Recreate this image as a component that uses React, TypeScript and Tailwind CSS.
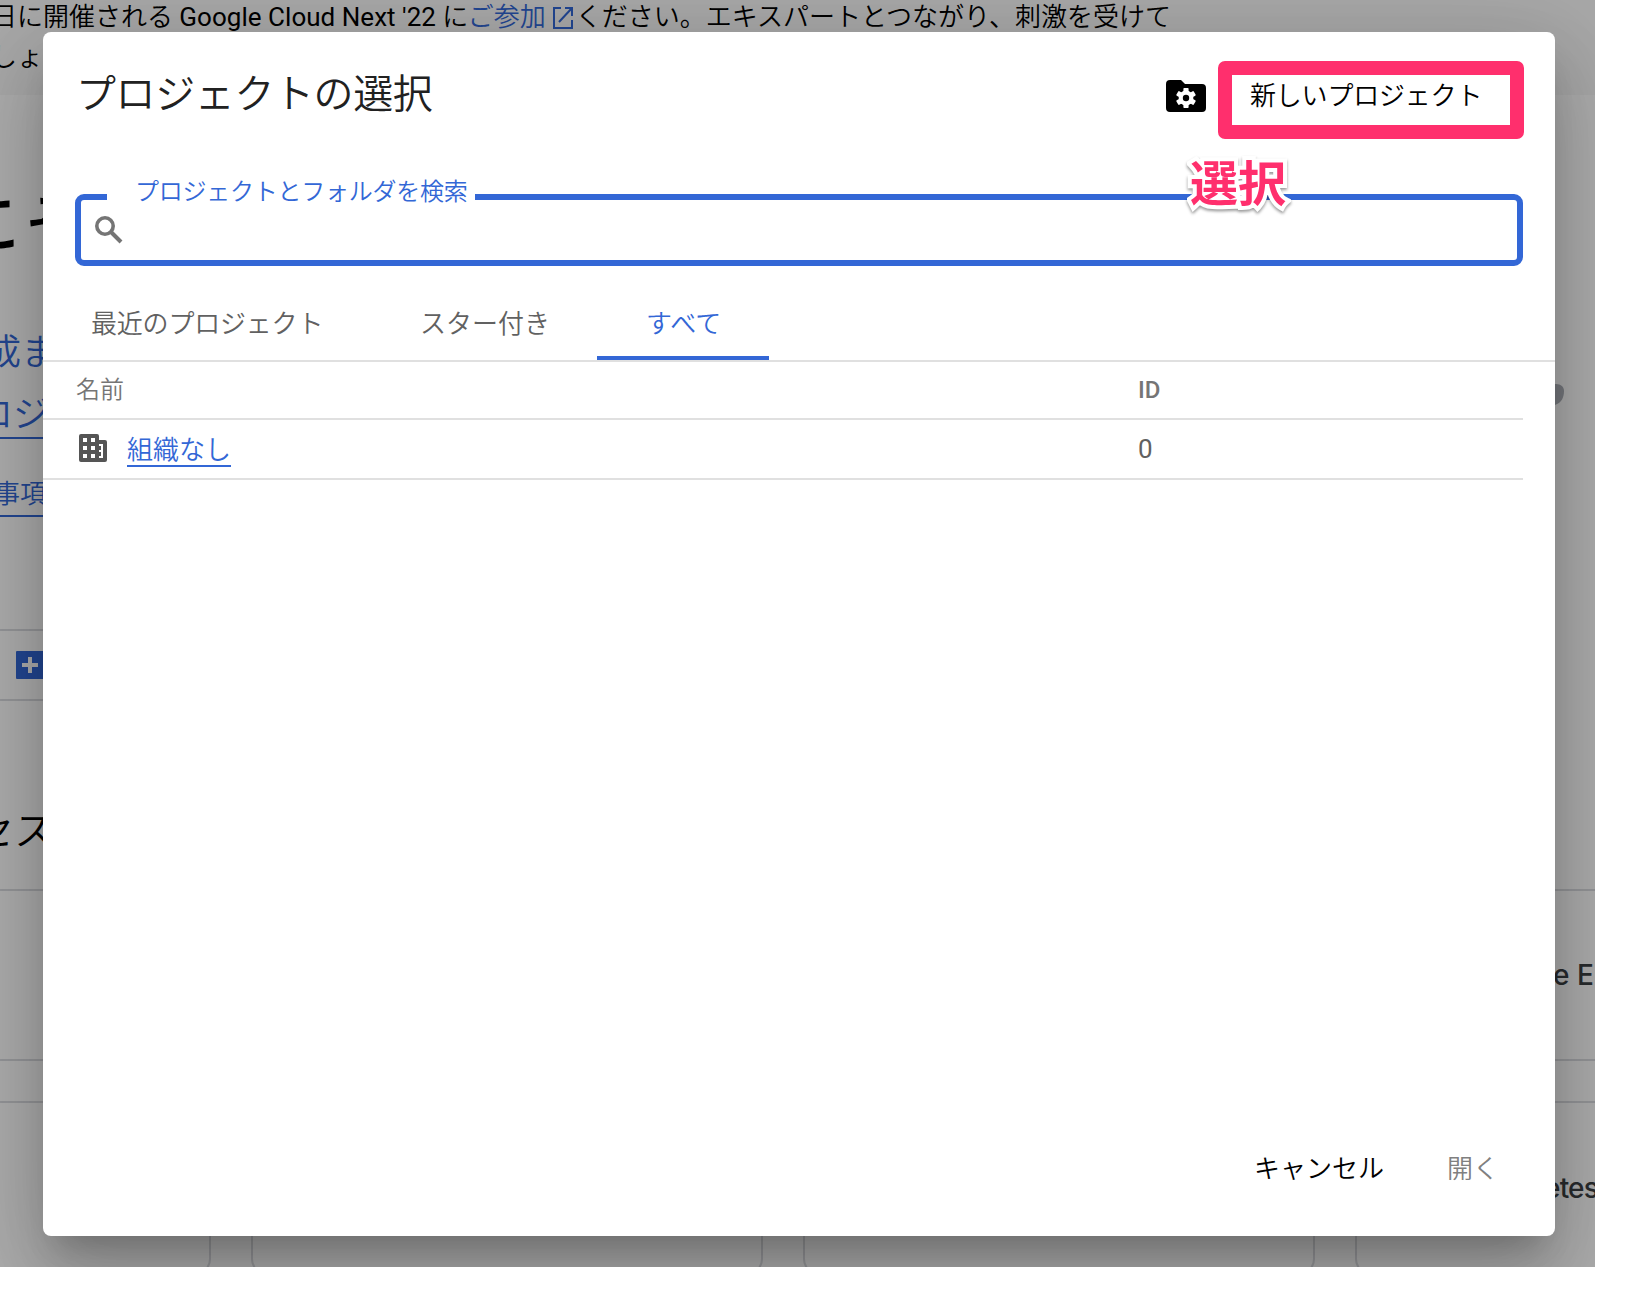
const tabs = [
  { label: "最近のプロジェクト", className: "w-[329px] pl-[48px] tracking-[-0.2px]", active: false },
  { label: "スター付き", className: "w-[225px] pl-[48px]", active: false },
  { label: "すべて", className: "w-[172px] pl-[49px]", active: true },
];

const topCards = ["", "", "", "e E"];
const bottomCards = ["", "", "", "etes"];

function LaunchIcon() {
  return (
    <svg className="inline-block ml-[7px] mr-[3px] -mt-[5px]" width="20" height="24" viewBox="0 0 20 24" fill="none" stroke="currentColor" strokeWidth="2">
      <path d="M8 3H1v20h18v-8M12 3h7v8M19 3L6 17" />
    </svg>
  );
}

function SearchIcon() {
  return (
    <svg width="28" height="28" viewBox="0 0 28 28" fill="none" stroke="#757575">
      <circle cx="10" cy="10" r="8.2" strokeWidth="3.6" />
      <path d="M16 16l10 10" strokeWidth="4" />
    </svg>
  );
}

function FolderSettingsIcon() {
  return (
    <svg width="40" height="32" viewBox="0 0 40 32">
      <path d="M4 0h11l4 4h17a4 4 0 0 1 4 4v20a4 4 0 0 1-4 4H4a4 4 0 0 1-4-4V4a4 4 0 0 1 4-4z" fill="#000" />
      <g fill="#fff">
        <circle cx="20" cy="18" r="7.4" />
        <rect x="17.4" y="8" width="5.2" height="20" rx="0.8" />
        <rect x="17.4" y="8" width="5.2" height="20" rx="0.8" transform="rotate(60 20 18)" />
        <rect x="17.4" y="8" width="5.2" height="20" rx="0.8" transform="rotate(120 20 18)" />
      </g>
      <circle cx="20" cy="18" r="3.2" fill="#000" />
    </svg>
  );
}

function OrganizationIcon() {
  return (
    <svg width="28" height="28" viewBox="0 0 28 28">
      <path d="M2 0h16a2 2 0 0 1 2 2v4h6a2 2 0 0 1 2 2v18a2 2 0 0 1-2 2H2a2 2 0 0 1-2-2V2a2 2 0 0 1 2-2z" fill="#555" />
      <path
        d="M4 4h4v4H4zM12 4h4v4h-4zM4 12h4v4H4zM12 12h4v4h-4zM4 20h4v4H4zM12 20h4v4h-4zM20 10h4v14h-4v-2h2v-4h-2v-2h2v-4h-2z"
        fill="#fff"
      />
    </svg>
  );
}

function CardRow({ titles, className }: { titles: string[]; className: string }) {
  return (
    <div className={`flex gap-10 -ml-[301px] w-max ${className}`}>
      {titles.map((title, index) => (
        <div
          key={index}
          className="w-[512px] h-full shrink-0 rounded-[16px] border-2 border-[#dadce0] flex items-center pl-[196px] text-[28px] font-medium text-[#3c4043] font-['Inter',sans-serif]"
        >
          {title && <span className={title === "etes" ? "-ml-[9px] tracking-[-0.8px]" : ""}>{title}</span>}
        </div>
      ))}
    </div>
  );
}

function ConsolePage() {
  return (
    <div className="h-full text-black whitespace-nowrap">
      {/* Announcement banner */}
      <div className="h-[95px] bg-[#f8f8f8] text-[26px] leading-[40px]">
        <div className="-ml-[9px] -mt-[3px] absolute font-[350]">
          <p>
            日に開催される <span className="font-normal tracking-[0.03px]">Google Cloud Next '22</span> に
            <span className="text-[#3367d6]">
              ご参加
              <LaunchIcon />
            </span>
            ください。エキスパートとつながり、刺激を受けて
          </p>
          <p>しょう。</p>
        </div>
      </div>

      <div className="w-[800px] font-[350] text-[#3367d6]">
        <p className="pt-[90px] -ml-[40px] h-[170px] text-[64px] leading-[80px] font-medium text-black">こそ</p>
        <p className="mt-[68px] -ml-[15px] h-[40px] text-[36px] leading-[40px]">成ま</p>
        <p className="mt-[20px] -ml-[23px] h-[46px] text-[36px] leading-[44px] border-b-2 border-[#3367d6]">ロジ</p>
        <p className="mt-[41px] -ml-[6px] h-[37px] text-[26px] leading-[28px] border-b-2 border-[#3367d6]">事項</p>

        <div className="mt-[112px] h-[72px] border-y-2 border-[#dadce0] flex items-center pl-4">
          <svg width="28" height="28" viewBox="0 0 28 28">
            <rect width="28" height="28" rx="1" fill="#3367d6" />
            <path d="M12 6h4v6h6v4h-6v6h-4v-6H6v-4h6z" fill="#fff" />
          </svg>
        </div>

        <p className="mt-[111px] -ml-[26px] h-[40px] text-[40px] leading-[40px] text-black">セス</p>
      </div>
      <CardRow titles={topCards} className="mt-[37px] h-[172px]" />
      <CardRow titles={bottomCards} className="mt-10 h-[174px]" />
    </div>
  );
}

function ProjectDialog() {
  return (
    <div className="absolute left-[43px] top-[32px] w-[1512px] h-[1204px] rounded-[8px] bg-white flex flex-col font-[350] shadow-[0_22px_30px_-14px_rgba(0,0,0,0.2),0_48px_76px_6px_rgba(0,0,0,0.14),0_18px_92px_16px_rgba(0,0,0,0.12)]">
      <div className="relative h-[162px] flex items-start justify-between pl-[33px] pr-[31px] pt-[29px]">
        <h1 className="text-[40px] leading-[60px] mt-[4px] tracking-[-0.4px] text-[#212121]">プロジェクトの選択</h1>
        <div className="flex items-start">
          <div className="mt-[19px] mr-3">
            <FolderSettingsIcon />
          </div>
          <button className="w-[306px] h-[78px] border-[14px] border-[#ff2f6d] rounded-[7px] text-[26px] leading-[40px] text-left pl-[18px] pb-[9px] tracking-[-0.2px]">
            新しいプロジェクト
          </button>
        </div>
        <span className="absolute z-10 left-[1147px] top-[117px] text-[48px] leading-[72px] font-bold text-[#ff2f6d] [-webkit-text-stroke:8px_white] [paint-order:stroke_fill] [stroke-linejoin:round] [filter:drop-shadow(0_2px_1.5px_rgba(0,0,0,0.4))]">
          選択
        </span>
      </div>

      {/* Search field with a notched outline */}
      <div className="relative ml-8 w-[1448px] h-[72px] border-[6px] border-[#3367d6] rounded-[9px] pl-[14px] pt-4">
        <SearchIcon />
        <label className="absolute left-[26px] -top-[26px] w-[368px] h-[36px] bg-white pl-[28px] text-[24px] leading-[36px] tracking-[-0.25px] text-[#3367d6] whitespace-nowrap">
          プロジェクトとフォルダを検索
        </label>
      </div>

      <div className="mt-[22px] h-[74px] flex border-b-2 border-[#e0e0e0] text-[26px] leading-[72px] text-[#616161]">
        {tabs.map((tab) => (
          <div
            key={tab.label}
            className={`${tab.className} h-[72px] ${tab.active ? "text-[#3367d6] border-b-4 border-[#3367d6]" : ""}`}
          >
            {tab.label}
          </div>
        ))}
      </div>

      <div className="w-[1480px]">
        <div className="h-[58px] border-b-2 border-[#e0e0e0] flex pl-[33px] text-[24px] leading-[56px] text-[#757575]">
          <span className="w-[1062px]">名前</span>
          <span className="font-medium">ID</span>
        </div>
        <div className="h-[60px] border-b-2 border-[#e0e0e0] flex pl-9 text-[26px] text-[#616161]">
          <div className="w-12 pt-[14px]">
            <OrganizationIcon />
          </div>
          <div className="w-[1011px]">
            <a className="inline-block h-[47px] leading-[60px] text-[#3367d6] border-b-2 border-[#3367d6]">組織なし</a>
          </div>
          <span className="leading-[58px] font-normal">0</span>
        </div>
      </div>

      <div className="mt-auto mb-[47px] flex justify-end gap-[63px] pr-[56px] text-[26px] leading-[40px]">
        <button>キャンセル</button>
        <button className="text-[#808080]">開く</button>
      </div>
    </div>
  );
}

export default function App() {
  return (
    <div className="w-[1636px] h-[1308px] bg-white font-['Roboto','Noto_Sans_CJK_JP',sans-serif]">
      <div className="relative w-[1595px] h-[1267px] overflow-hidden">
        <ConsolePage />
        <svg className="absolute left-[1544px] top-[384px]" width="20" height="21" viewBox="0 0 20 21">
          <path d="M0 0h12c5 0 8 3 8 7 0 7-3 12-9 14H0z" fill="#aeb1b9" />
        </svg>
        <div className="absolute inset-0 bg-black/32" />
        <ProjectDialog />
      </div>
    </div>
  );
}
